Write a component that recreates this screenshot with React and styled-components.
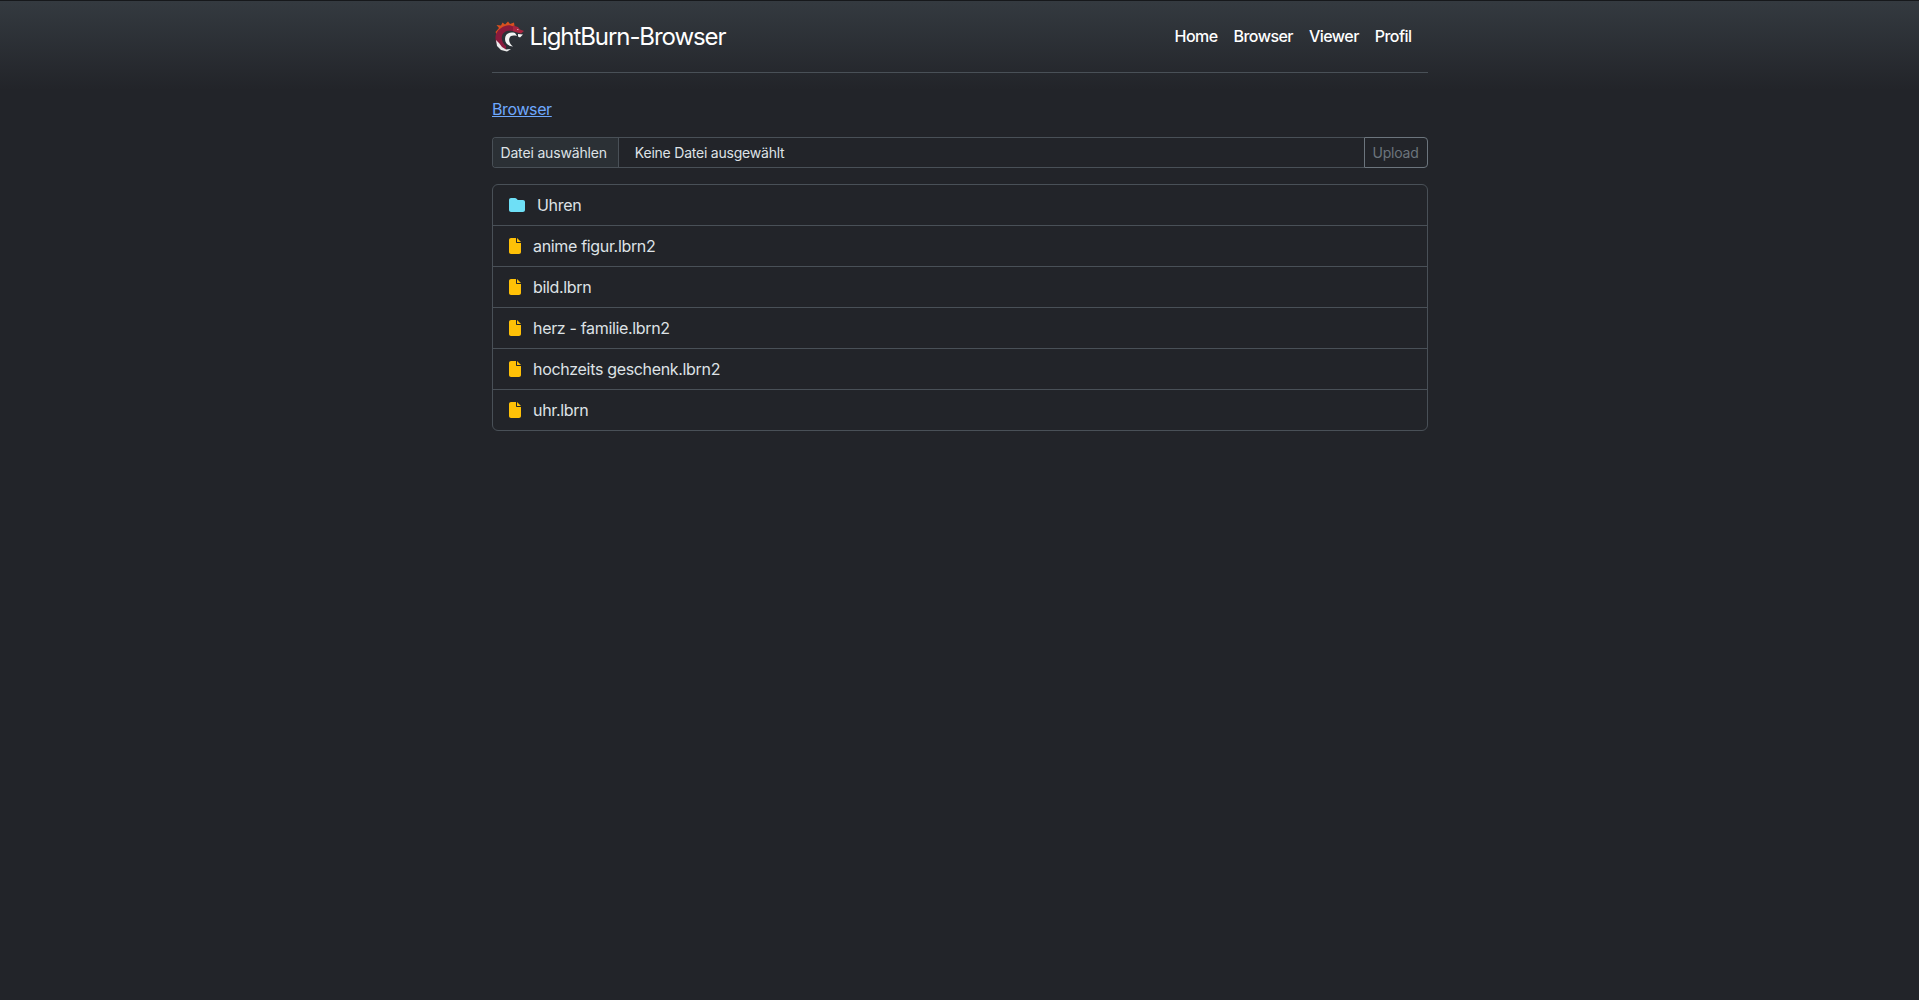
import React from "react";
import styled, { createGlobalStyle } from "styled-components";
import { FaFolder, FaFile } from "react-icons/fa6";

const Global = createGlobalStyle`
  html, body { margin: 0; padding: 0; min-height: 100%; }
  body {
    min-height: 1000px;
    background: #222429 linear-gradient(180deg, #16181b 0, #16181b 1px, #343a40 1px, #222429 90px) no-repeat;
    background-size: 100% 90px;
    color: #dee2e6;
    font-family: Inter, "Liberation Sans", Arial, sans-serif;
    font-size: 16px;
    line-height: 1.5;
    box-sizing: border-box;
  }
  * { box-sizing: inherit; }
`;

const Container = styled.div`
  width: 960px;
  margin: 0 auto;
  padding: 0 12px;
`;

const Header = styled.header`
  display: flex;
  align-items: center;
  justify-content: space-between;
  height: 73px;
  margin-bottom: 24px;
  border-bottom: 1px solid #495057;
`;

const Brand = styled.a`
  display: flex;
  align-items: center;
  gap: 5px;
  padding-left: 1px;
  margin-top: 2px;
  color: #fff;
  font-size: 24px;
  line-height: 36px;
  letter-spacing: -1.08px;
  text-decoration: none;
`;

const LogoMark = styled.svg`
  display: block;
  width: 32px;
  height: 32px;
  margin-top: -2px;
`;

const Nav = styled.nav`
  display: flex;
`;

const NavLink = styled.a`
  padding: 8px;
  color: #fff;
  font-size: 16px;
  font-weight: 500;
  letter-spacing: -0.55px;
  text-decoration: none;
  &:last-child { padding-right: 16px; }
`;

const Crumb = styled.a`
  display: block;
  width: max-content;
  margin-left: 0.5px;
  margin-bottom: 16px;
  color: #6ea8fe;
  text-decoration: underline;
  letter-spacing: -0.38px;
`;

const UploadForm = styled.form`
  display: flex;
  height: 31px;
  margin-bottom: 16px;
  font-size: 14px;
`;

const FileField = styled.div`
  flex: 1;
  display: flex;
  align-items: center;
  border: 1px solid #495057;
  border-right: 0;
  border-radius: 4px 0 0 4px;
  overflow: hidden;
`;

const FileButton = styled.span`
  display: flex;
  align-items: center;
  height: 100%;
  padding: 0 11px 0 8px;
  background: #2b3035;
  border-right: 1px solid #495057;
  color: #dee2e6;
  letter-spacing: -0.17px;
`;

const FileName = styled.span`
  padding-left: 16px;
  color: #dee2e6;
  letter-spacing: -0.22px;
`;

const UploadButton = styled.button`
  width: 64px;
  height: 31px;
  padding: 0;
  background: transparent;
  border: 1px solid #6c757d;
  border-radius: 0 4px 4px 0;
  color: #6c757d;
  font: inherit;
  font-size: 14px;
  letter-spacing: -0.2px;
`;

const List = styled.ul`
  list-style: none;
  margin: 0;
  padding: 0;
  border: 1px solid #495057;
  border-radius: 6px;
  overflow: hidden;
`;

const Row = styled.li`
  display: flex;
  align-items: center;
  height: 41px;
  padding-left: 16px;
  color: #dee2e6;
  letter-spacing: -0.33px;
  & + & { border-top: 1px solid #495057; }
  &:first-child { height: 40px; }
`;

const Icon = styled.span`
  display: flex;
  align-items: center;
  width: ${(p) => (p.$folder ? "28.5px" : "24.5px")};
  color: ${(p) => (p.$folder ? "#6edff6" : "#ffc107")};
  svg {
    display: block;
    width: ${(p) => (p.$folder ? "16px" : "12px")};
    height: 16px;
  }
`;

const Logo = () => (
  <LogoMark viewBox="0 0 32 32" aria-hidden="true">
    <path d="M6 8 L3.5 5 L8 5.5 L9.5 2.5 L12 4.5 L15 1.5 L17 4 L21 2.5 L21.5 6 L14 9 L8 12 L4 15 L2.5 12 Z" fill="#d9501f" />
    <path d="M12 6 C6 8 2 13 2.5 19 C3 25 7 29 13 30 L13 26 C10 24 8 20 9 16 C10 12 14 10 19 11 L24 12 L21 7 C18 5 15 5 12 6 Z" fill="#8a1a3c" />
    <path d="M20 5.5 L25 7 L27 9.5 L31 11 L28 13.5 L24 12.5 L20 11 Z" fill="#a8243f" />
    <path d="M25 14 L30 14.5 L27 17.5 L25 16.5 Z" fill="#f4f4f4" />
    <path d="M22 13 C16 11.5 12 14 12 19 C12 23 15 26 20 26.5 C16.5 23.5 15.5 20.5 16.5 18 C17.5 15.5 20 15 24 16 Z" fill="#f4f4f4" />
    <path d="M3 20 L6 23 L9 27 L13 29.5 L18 29 L14 31.5 L8 30 L4 26 Z" fill="#ececec" />
    <path d="M24 9 L25.5 9.2 L25 10.2 Z" fill="#fff" />
  </LogoMark>
);

const files = [
  "anime figur.lbrn2",
  "bild.lbrn",
  "herz - familie.lbrn2",
  "hochzeits geschenk.lbrn2",
  "uhr.lbrn",
];

export default function App() {
  return (
    <>
      <Global />
      <Container>
        <Header>
          <Brand href="#">
            <Logo />
            LightBurn-Browser
          </Brand>
          <Nav>
            <NavLink href="#">Home</NavLink>
            <NavLink href="#">Browser</NavLink>
            <NavLink href="#">Viewer</NavLink>
            <NavLink href="#">Profil</NavLink>
          </Nav>
        </Header>
        <Crumb href="#">Browser</Crumb>
        <UploadForm onSubmit={(e) => e.preventDefault()}>
          <FileField>
            <FileButton>Datei auswählen</FileButton>
            <FileName>Keine Datei ausgewählt</FileName>
          </FileField>
          <UploadButton disabled>Upload</UploadButton>
        </UploadForm>
        <List>
          <Row>
            <Icon $folder>
              <FaFolder />
            </Icon>
            Uhren
          </Row>
          {files.map((f) => (
            <Row key={f}>
              <Icon>
                <FaFile />
              </Icon>
              {f}
            </Row>
          ))}
        </List>
      </Container>
    </>
  );
}
